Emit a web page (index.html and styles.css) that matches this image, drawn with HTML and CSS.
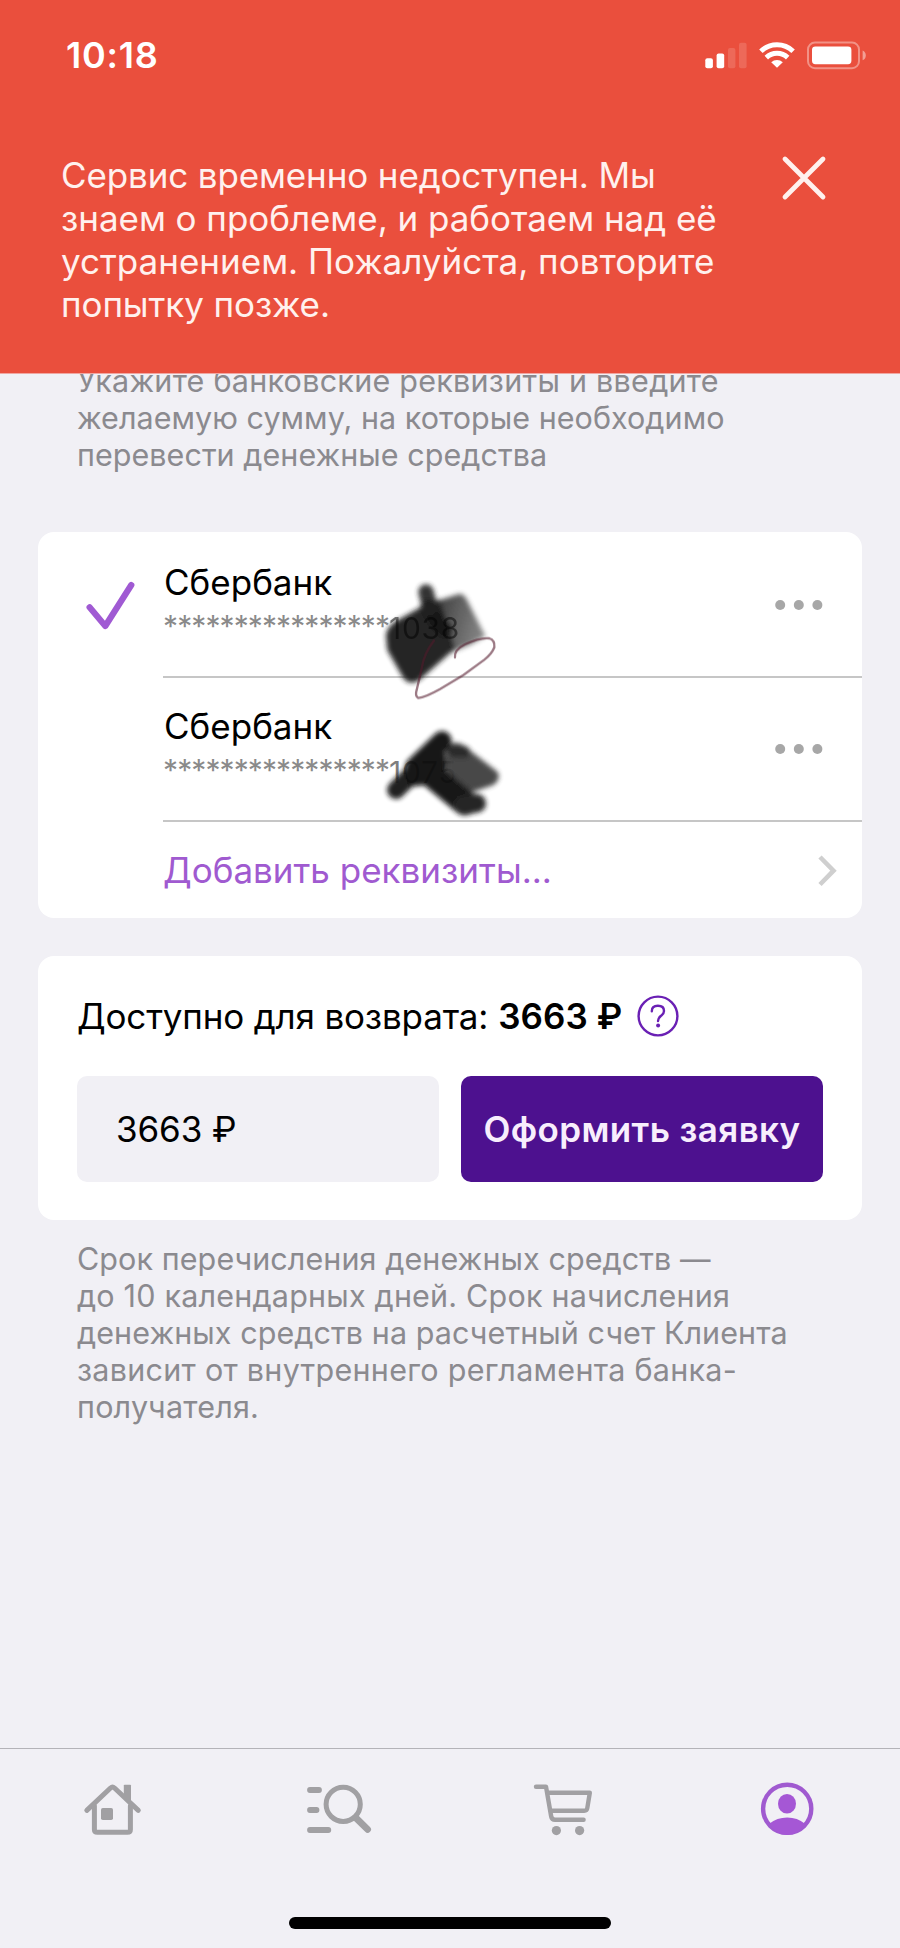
FILE: index.html
```html
<!DOCTYPE html>
<html lang="ru">
<head>
<meta charset="utf-8">
<title>Возврат средств</title>
<link rel="stylesheet" href="styles.css">
</head>
<body>
<div class="screen">
  <header class="banner">
    <div class="status">
      <span class="time">10:18</span>
      <svg class="status-icons" width="164" height="30" viewBox="704 40 164 30" fill="#fff">
        <rect x="705.3" y="58.3" width="7.6" height="10" rx="2"/>
        <rect x="716.6" y="53.5" width="7.6" height="14.8" rx="2"/>
        <rect x="728" y="48" width="7.4" height="20.3" rx="2" opacity=".15"/>
        <rect x="739" y="42.8" width="7.6" height="25.5" rx="2" opacity=".15"/>
        <path d="M777 67.8l-5.8-5.6a8.4 8.4 0 0 1 11.6 0z"/>
        <path d="M766.3 57.6a15.4 15.4 0 0 1 21.4 0M760.9 51.2a23.4 23.4 0 0 1 32.2 0" fill="none" stroke="#fff" stroke-width="5"/>
        <rect x="808" y="42.6" width="51" height="25.6" rx="7" fill="none" stroke="#fff" stroke-opacity=".38" stroke-width="2"/>
        <rect x="812" y="46.4" width="39.4" height="17.8" rx="3.4"/>
        <path d="M862.6 50.6q3.2 1.4 3.2 4.8t-3.2 4.8z" opacity=".45"/>
      </svg>
    </div>
    <div class="alert">
      <p class="alert-text"><span class="a1">Сервис временно недоступен. Мы</span><span class="a2">знаем о проблеме, и работаем над её</span><span class="a3">устранением. Пожалуйста, повторите</span><span class="a4">попытку позже.</span></p>
      <svg class="close" width="46" height="46" viewBox="0 0 46 46"><path d="M4 4l38 38M42 4L4 42" stroke="#fff1ee" stroke-width="4.8" stroke-linecap="round"/></svg>
    </div>
  </header>

  <main class="content">
    <p class="note intro"><span class="i1">Укажите банковские реквизиты и введите</span><span class="i2">желаемую сумму, на которые необходимо</span><span class="i3">перевести денежные средства</span></p>

    <section class="card accounts">
      <div class="row">
        <div class="mark"><svg width="50" height="50" viewBox="0 0 50 50"><path d="M4.6 27.3L20.3 46 46.3 5" fill="none" stroke="#a05ad3" stroke-width="6.2" stroke-linecap="round" stroke-linejoin="round"/></svg></div>
        <div class="cell">
          <div class="bank"><div class="name">Сбербанк</div><div class="number"><span class="stars">****************</span><span class="digits">1038</span></div></div>
          <svg class="dots" width="48" height="10" viewBox="0 0 48 10" fill="#a7a7a7"><circle cx="5.2" cy="5" r="5"/><circle cx="23.8" cy="5" r="5"/><circle cx="42.4" cy="5" r="5"/></svg>
        </div>
      </div>
      <div class="row">
        <div class="mark"></div>
        <div class="cell line">
          <div class="bank"><div class="name">Сбербанк</div><div class="number"><span class="stars">****************</span><span class="digits">1075</span></div></div>
          <svg class="dots" width="48" height="10" viewBox="0 0 48 10" fill="#a7a7a7"><circle cx="5.2" cy="5" r="5"/><circle cx="23.8" cy="5" r="5"/><circle cx="42.4" cy="5" r="5"/></svg>
        </div>
      </div>
      <div class="row">
        <div class="mark"></div>
        <div class="cell line add">
          <span class="add-text">Добавить реквизиты...</span>
          <svg width="20" height="34" viewBox="0 0 20 34"><path d="M2 3l13.5 13.7L2 30.5" fill="none" stroke="#cfcfcf" stroke-width="4.6"/></svg>
        </div>
      </div>
      <svg class="scribble" width="130" height="240" viewBox="120 180 390 720">
        <defs>
          <filter id="soft" x="-20%" y="-20%" width="140%" height="140%"><feGaussianBlur stdDeviation="8"/></filter>
          <linearGradient id="fade" x1="0" y1="0" x2="1" y2=".3"><stop offset="0" stop-color="#2a2a2a"/><stop offset=".5" stop-color="#555"/><stop offset="1" stop-color="#7c7c7c"/></linearGradient>
        </defs>
        <g filter="url(#soft)" stroke-linejoin="round" stroke-linecap="round">
          <path d="M270 250L355 222Q372 220 382 242L436 348 395 372 325 400 270 400z" fill="url(#fade)"/>
          <path d="M138 345Q141 322 165 305L245 260 300 238 330 330 346 385 238 480Q210 498 190 474L142 390z" fill="#1e1e1e"/>
          <path d="M258 216L270 262" fill="none" stroke="#2c2c2c" stroke-width="46"/>
          <path d="M266 262L292 306 315 328" fill="none" stroke="#0c0c0c" stroke-width="50" opacity=".75"/>
          <path d="M318 680Q350 655 380 684L472 755Q486 775 460 795L400 815 320 805z" fill="#404040"/>
          <path d="M340 694L372 696" stroke="#222" stroke-width="36"/>
          <path d="M168 810L235 745" fill="none" stroke="#141414" stroke-width="54"/>
          <path d="M225 740L306 662" fill="none" stroke="#111" stroke-width="58"/>
          <path d="M196 755L245 690 315 690 320 740 300 780 250 796 205 800z" fill="#080808"/>
          <path d="M275 765L375 848" fill="none" stroke="#080808" stroke-width="76"/>
          <path d="M370 856L410 850" fill="none" stroke="#1d1d1d" stroke-width="56"/>
        </g>
        <path d="M345 412Q342 390 375 373Q420 352 448 355Q465 360 463 382Q455 402 433 419L370 465 300 507Q255 532 235 534Q224 528 230 510L245 445Q252 400 282 362" fill="none" stroke="#4c1022" stroke-opacity=".58" stroke-width="7" stroke-linecap="round"/>
      </svg>
    </section>

    <section class="card refund">
      <div class="available"><span class="label">Доступно для возврата:</span><b class="sum">3663 ₽</b>
        <svg width="42" height="42" viewBox="0 0 42 42" fill="none" stroke="#6a20b4"><circle cx="21" cy="21" r="19.4" stroke-width="2.4"/><path d="M14.8 16.2Q14.8 10.8 20.9 10.8T27 16Q27 18.3 24.6 20.3C22.2 22.3 21 23 21 26" stroke-width="2.4" stroke-linecap="round"/><circle cx="21.1" cy="30.6" r="2" fill="#6a20b4" stroke="none"/></svg>
      </div>
      <div class="form">
        <div class="amount">3663 ₽</div>
        <div class="submit">Оформить заявку</div>
      </div>
    </section>

    <p class="note terms"><span class="t1">Срок перечисления денежных средств —</span><span class="t2">до 10 календарных дней. Срок начисления</span><span class="t3">денежных средств на расчетный счет Клиента</span><span class="t4">зависит от внутреннего регламента банка-</span><span class="t5">получателя.</span></p>
  </main>

  <footer class="tabs">
    <nav class="tab-row">
      <svg width="60" height="56" viewBox="82 1782 60 56" fill="none" stroke="#a1a0a3" stroke-width="5" stroke-linecap="round" stroke-linejoin="round"><path d="M86.8 1810.4L110.5 1788a3 3 0 0 1 4 0L138.3 1810.4"/><path d="M94.4 1806V1829.4Q94.4 1832.3 97.4 1832.3H127.4Q130.4 1832.3 130.4 1829.4V1806"/><path d="M123.8 1785.6q0-.8.8-.8h5.6q.8 0 .8.8V1803l-7.2-6z" fill="#a1a0a3" stroke="none"/><rect x="101" y="1808" width="12" height="12" rx="1.8" fill="#a1a0a3" stroke="none"/></svg>
      <svg class="tab-search" width="70" height="56" viewBox="304 1782 70 56" fill="none" stroke="#a1a0a3" stroke-linecap="round"><path d="M310 1790h9M310 1810h6.5M310 1830h18.3" stroke-width="5.8"/><circle cx="343.2" cy="1804.3" r="17.1" stroke-width="5"/><path d="M356 1818l11.6 11.4" stroke-width="6.8"/></svg>
      <svg class="tab-cart" width="64" height="56" viewBox="531 1782 64 56" fill="none" stroke="#a1a0a3" stroke-width="4.4" stroke-linecap="round" stroke-linejoin="round"><path d="M536 1786.7H546L551.2 1816.5Q551.8 1819.8 555 1819.8H583.6"/><path d="M548.5 1792.8H589.8L587.3 1808Q586.9 1810.7 584.3 1810.7H551.5"/><g fill="#a1a0a3" stroke="none"><circle cx="556.4" cy="1830.6" r="4.6"/><circle cx="579.6" cy="1830.6" r="4.6"/></g></svg>
      <svg class="tab-profile" width="56" height="56" viewBox="759 1782 56 56" fill="#a557d5"><circle cx="787.2" cy="1808.8" r="24.1" fill="none" stroke="#a05ad0" stroke-width="4.4"/><ellipse cx="787" cy="1803.7" rx="9" ry="9.8"/><path d="M769.6 1823.4Q776.8 1817.4 787.2 1817.4T804.6 1823.4Q798 1835 787.2 1835T769.6 1823.4z"/></svg>
    </nav>
    <div class="home-bar"></div>
  </footer>
</div>
</body>
</html>
```
FILE: styles.css
```css
* { box-sizing: border-box; }
body { margin: 0; background: #f1f0f5; font-family: Inter, "Noto Sans", sans-serif; color: #000; }
p { margin: 0; }
svg { display: block; flex: none; }
.screen { width: 900px; height: 1948px; display: flex; flex-direction: column; overflow: hidden; }

.banner { height: 374px; flex: none; background: #ea4f3d; color: #fff; position: relative; z-index: 1; border-bottom: 1px solid #f0a7a2; }
.status { height: 112px; padding: 33px 32px 0 66px; display: flex; justify-content: space-between; align-items: flex-start; }
.time { font-size: 36px; line-height: 44px; font-weight: 600; letter-spacing: 0.8px; }
.status-icons { margin-top: 7px; }
.alert { padding: 42px 73px 0 61px; display: flex; justify-content: space-between; }
.alert-text { font-size: 35px; line-height: 43px; color: #fff1ee; }
.alert-text span, .note span { display: block; white-space: nowrap; }
.a1 { letter-spacing: -0.13px; }
.a2 { letter-spacing: -0.04px; }
.a4 { letter-spacing: -0.09px; }
.close { margin-top: 1px; }

.content { flex: 1; display: flex; flex-direction: column; }
.note { font-size: 30.5px; line-height: 37.2px; color: #8b8a8f; padding-left: 77px; }
.intro { margin-top: -12px; }
.i1 { letter-spacing: 0.26px; }
.i2, .i3 { letter-spacing: 0.04px; }

.card { margin: 0 38px; background: #fff; border-radius: 16px; }
.accounts { margin-top: 58px; height: 386px; position: relative; }
.row { display: flex; height: 144px; }
.row:nth-child(3) { height: 98px; }
.mark { width: 125px; flex: none; padding: 48px 0 0 47px; }
.cell { flex: 1; display: flex; justify-content: space-between; padding: 29px 39px 0 0; }
.cell.line { border-top: 2px solid #c6c6c6; padding-top: 27px; }
.name, .add-text { font-size: 35px; line-height: 43px; }
.name { padding-left: 1px; }
.number { margin-top: 6px; font-size: 30px; line-height: 37px; color: #8a8a8a; display: flex; }
.stars { width: 226px; letter-spacing: -0.9px; margin-top: -2px; }
.digits { position: relative; z-index: 2; color: #000; opacity: 0.5; letter-spacing: 0.7px; }
.row:nth-child(2) .digits { z-index: 0; }
.dots { margin-top: 39px; }
.cell.add { padding: 27px 24px 0 0; }
.add-text { color: #a05ad0; }
.add svg { margin-top: 5px; }
.scribble { position: absolute; left: 342px; top: 48px; opacity: 0.96; }

.refund { margin-top: 38px; height: 264px; padding: 39px 39px 0; }
.available { display: flex; font-size: 35px; line-height: 43px; }
.label { letter-spacing: -0.17px; }
.sum { font-weight: 600; margin-left: 10px; letter-spacing: 0.1px; }
.available svg { margin: 0 0 0 15px; }
.form { margin-top: 38px; display: flex; gap: 22px; }
.amount, .submit { width: 362px; height: 106px; border-radius: 10px; font-size: 35px; line-height: 107px; }
.amount { background: #f1f0f5; padding-left: 39px; letter-spacing: -0.1px; }
.submit { background: #4d118f; color: #f8eefd; font-weight: 600; text-align: center; white-space: nowrap; letter-spacing: 0.4px; }
.terms { margin-top: 20px; }
.t1, .t3 { letter-spacing: 0.08px; }
.t2, .t5 { letter-spacing: 0.2px; }
.t4 { letter-spacing: 0.28px; }

.tabs { height: 200px; flex: none; border-top: 1px solid #b4b3b8; display: flex; flex-direction: column; align-items: center; }
.tab-row { width: 900px; height: 168px; padding: 33px 0 0 82px; display: flex; align-items: flex-start; }
.tab-search { margin-left: 162px; }
.tab-cart { margin-left: 157px; }
.tab-profile { margin-left: 164px; }
.home-bar { width: 322px; height: 12px; border-radius: 6px; background: #000; }
```
